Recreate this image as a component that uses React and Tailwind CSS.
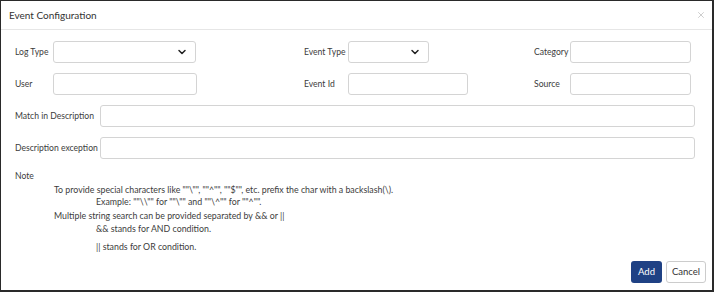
import React from 'react';
import { ChevronDown, X } from 'lucide-react';

const Field = ({ className = '' }) => (
  <div className={`h-[22px] shrink-0 border border-[#d4d4d4] rounded-[3px] bg-white ${className}`} />
);

const Select = ({ className = '' }) => (
  <div className={`h-[22px] shrink-0 border border-[#d4d4d4] rounded-[3px] bg-white flex items-center justify-end pr-[7px] ${className}`}>
    <ChevronDown size={12} strokeWidth={3} className="text-[#222]" />
  </div>
);

const Label = ({ className = '', children }) => (
  <span className={`shrink-0 whitespace-nowrap ${className}`}>{children}</span>
);

export default function App() {
  return (
    <div
      className="w-[714px] h-[292px] bg-white border-l border-t border-[#2a2a2a] border-r-2 border-b-2 flex flex-col text-[#3c3c3c] font-['Lato',sans-serif]"
    >
      {/* Header */}
      <div className="h-[29px] border-b border-[#e6e6e6] flex items-center justify-between pl-[8px] pr-[6px]">
        <span className="text-[10px] text-[#333]">Event Configuration</span>
        <X size={10} strokeWidth={2} className="text-[#c4c4c4]" />
      </div>

      {/* Body */}
      <div className="flex flex-col pl-[14px] pt-[11px] text-[8.6px]">
        <div className="flex items-center h-[22px]">
          <Label className="w-[38px]">Log Type</Label>
          <Select className="w-[143px]" />
          <Label className="ml-[108px] w-[44px]">Event Type</Label>
          <Select className="w-[81px]" />
          <Label className="ml-[105px] w-[36px]">Category</Label>
          <Field className="w-[121px]" />
        </div>

        <div className="flex items-center h-[22px] mt-[10px]">
          <Label className="w-[38px]">User</Label>
          <Field className="w-[144px]" />
          <Label className="ml-[107px] w-[44px]">Event Id</Label>
          <Field className="w-[120px]" />
          <Label className="ml-[66px] w-[36px]">Source</Label>
          <Field className="w-[121px]" />
        </div>

        <div className="flex items-center h-[22px] mt-[10px]">
          <Label className="w-[85px]">Match in Description</Label>
          <Field className="w-[595px]" />
        </div>

        <div className="flex items-center h-[22px] mt-[10px]">
          <Label className="w-[85px]">Description exception</Label>
          <Field className="w-[595px]" />
        </div>

        <div className="mt-[11px] leading-[12px]">Note</div>
        <div className="pl-[39px] mt-[2px] text-[8.8px] leading-[12px] whitespace-nowrap">
          <div>To provide special characters like ""\"", ""^"", ""$"", etc. prefix the char with a backslash(\).</div>
          <div className="pl-[42px]">Example: ""\\"" for ""\"" and ""\^"" for ""^"".</div>
          <div className="mt-[2px]">Multiple string search can be provided separated by &amp;&amp; or ||</div>
          <div className="pl-[42px] mt-[1px]">&amp;&amp; stands for AND condition.</div>
          <div className="pl-[42px] mt-[6px]">|| stands for OR condition.</div>
        </div>
      </div>

      {/* Footer */}
      <div className="flex justify-end gap-[4px] pr-[6px] mt-auto mb-[7px] text-[9.5px]">
        <button className="h-[22px] w-[31px] rounded-[3px] bg-[#1f4184] text-white">Add</button>
        <button className="h-[22px] w-[40px] rounded-[3px] border border-[#ccc] bg-white text-[#333]">Cancel</button>
      </div>
    </div>
  );
}
